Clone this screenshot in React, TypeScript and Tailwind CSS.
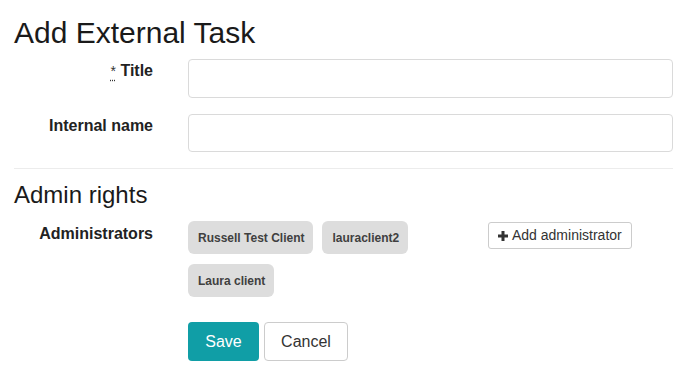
import React from "react";

const font = { fontFamily: '"Liberation Sans", Arial, sans-serif' };

function PlusIcon() {
  return (
    <svg width="10" height="10" viewBox="0 0 10 10" className="shrink-0">
      <rect x="3.5" y="0" width="3" height="10" fill="#333" />
      <rect x="0" y="3.5" width="10" height="3" fill="#333" />
    </svg>
  );
}

function Chip({ label }: { label: string }) {
  return (
    <div className="flex h-[33px] items-center rounded-[6px] bg-[#dddddd] pl-[10px] pr-[9px] text-[12px] font-bold text-[#404040]">
      {label}
    </div>
  );
}

export default function App() {
  return (
    <div className="min-h-[391px] w-[688px] bg-white pl-[14px] pr-[15px] pt-[16px] text-[#222]" style={font}>
      <h1 className="text-[30px] leading-[34px] font-normal text-[#1a1a1a]">Add External Task</h1>

      <div className="mt-[9px] flex">
        <div className="w-[139px] shrink-0 pt-[2px] text-right text-[16px] leading-[20px] font-bold">
          <abbr
            title="required"
            className="text-[14px] font-normal text-[#333]"
            style={{ textDecorationLine: "underline", textDecorationStyle: "dotted", textUnderlineOffset: "4px" }}
          >
            *
          </abbr>{" "}
          Title
        </div>
        <div className="ml-[35px] flex-1">
          <input className="block h-[39px] w-full rounded-[4px] border border-[#dadada] bg-white px-3 outline-none" />
        </div>
      </div>

      <div className="mt-[16px] flex">
        <div className="w-[139px] shrink-0 pt-[2px] text-right text-[16px] leading-[20px] font-bold">Internal name</div>
        <div className="ml-[35px] flex-1">
          <input className="block h-[38px] w-full rounded-[4px] border border-[#dadada] bg-white px-3 outline-none" />
        </div>
      </div>

      <div className="mt-[16px] h-px bg-[#ececec]" />

      <h2 className="mt-[12px] text-[24px] leading-[28px] font-normal text-[#1a1a1a]">Admin rights</h2>

      <div className="mt-[12px] flex">
        <div className="w-[139px] shrink-0 pt-[3px] text-right text-[16px] leading-[20px] font-bold">Administrators</div>
        <div className="ml-[35px] flex flex-1 items-start">
          <div className="flex w-[290px] flex-wrap gap-x-[9px] gap-y-[10px]">
            <Chip label="Russell Test Client" />
            <Chip label="lauraclient2" />
            <Chip label="Laura client" />
          </div>
          <button className="ml-[10px] mt-[1px] flex h-[27px] items-center gap-[4px] rounded-[3px] border border-[#cccccc] bg-white pl-[9px] pr-[9px] text-[14px] text-[#333]">
            <PlusIcon />
            <span>Add administrator</span>
          </button>
        </div>
      </div>

      <div className="mt-[25px] flex gap-[5px] pl-[174px]">
        <button className="h-[39px] w-[71px] rounded-[4px] bg-[#109ea6] text-[16px] text-white">Save</button>
        <button className="h-[39px] w-[84px] rounded-[4px] border border-[#cccccc] bg-white text-[16px] text-[#333]">Cancel</button>
      </div>
    </div>
  );
}
